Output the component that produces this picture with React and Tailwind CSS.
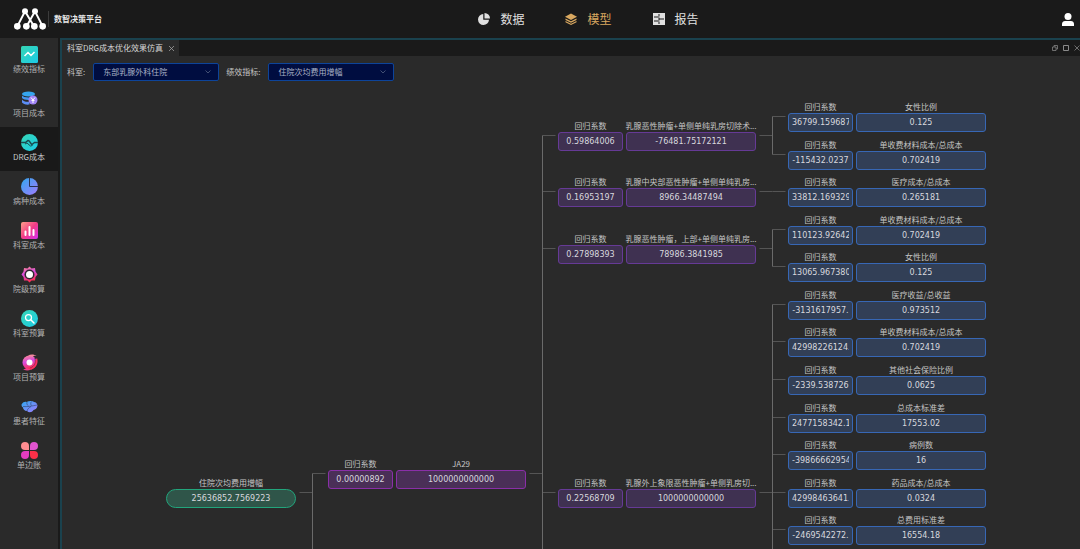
import React from "react";

const SERIES = [
  { label: "绩效指标", icon: "trend" },
  { label: "项目成本", icon: "coins" },
  { label: "DRG成本", icon: "pulse", active: true },
  { label: "病种成本", icon: "pie" },
  { label: "科室成本", icon: "bars" },
  { label: "院级预算", icon: "gear" },
  { label: "科室预算", icon: "search" },
  { label: "项目预算", icon: "swirl" },
  { label: "患者特征", icon: "shell" },
  { label: "单边账", icon: "clover" },
];

const TONES = {
  green: "bg-[#2f5549] border-[#22a57c] rounded-full",
  magenta: "bg-[#4a2f57] border-[#8a2fa8] rounded-[3px]",
  purple: "bg-[#3f3151] border-[#663a96] rounded-[3px]",
  blue: "bg-[#323f56] border-[#3767b5] rounded-[3px]",
};

// y is the top of the value box, inside the canvas
const NODES = [
  { id: "root", x: 104, y: 401, tone: "green", name: "住院次均费用增幅", value: "25636852.7569223" },
  { id: "ja29", x: 266, y: 382, tone: "magenta", name: "JA29", coef: "0.00000892", value: "1000000000000" },
  { id: "m1", x: 496, y: 44, tone: "purple", name: "乳腺恶性肿瘤+单侧单纯乳房切除术...", coef: "0.59864006", value: "-76481.75172121" },
  { id: "m2", x: 496, y: 100, tone: "purple", name: "乳腺中央部恶性肿瘤+单侧单纯乳房...", coef: "0.16953197", value: "8966.34487494" },
  { id: "m3", x: 496, y: 157, tone: "purple", name: "乳腺恶性肿瘤，上部+单侧单纯乳房...", coef: "0.27898393", value: "78986.3841985" },
  { id: "m4", x: 496, y: 401, tone: "purple", name: "乳腺外上象限恶性肿瘤+单侧乳房切...", coef: "0.22568709", value: "1000000000000" },
  { id: "l1", x: 726, y: 25, tone: "blue", name: "女性比例", coef: "36799.159687", value: "0.125" },
  { id: "l2", x: 726, y: 63, tone: "blue", name: "单收费材料成本/总成本", coef: "-115432.0237", value: "0.702419" },
  { id: "l3", x: 726, y: 100, tone: "blue", name: "医疗成本/总成本", coef: "33812.169329", value: "0.265181" },
  { id: "l4", x: 726, y: 138, tone: "blue", name: "单收费材料成本/总成本", coef: "110123.92642", value: "0.702419" },
  { id: "l5", x: 726, y: 175, tone: "blue", name: "女性比例", coef: "13065.967380", value: "0.125" },
  { id: "l6", x: 726, y: 213, tone: "blue", name: "医疗收益/总收益", coef: "-3131617957.", value: "0.973512" },
  { id: "l7", x: 726, y: 250, tone: "blue", name: "单收费材料成本/总成本", coef: "42998226124.", value: "0.702419" },
  { id: "l8", x: 726, y: 288, tone: "blue", name: "其他社会保险比例", coef: "-2339.538726", value: "0.0625" },
  { id: "l9", x: 726, y: 326, tone: "blue", name: "总成本标准差", coef: "2477158342.1", value: "17553.02" },
  { id: "l10", x: 726, y: 363, tone: "blue", name: "病例数", coef: "-39866662954", value: "16" },
  { id: "l11", x: 726, y: 401, tone: "blue", name: "药品成本/总成本", coef: "42998463641.", value: "0.0324" },
  { id: "l12", x: 726, y: 438, tone: "blue", name: "总费用标准差", coef: "-2469542272.", value: "16554.18" },
];

// x of the trunk, parent line, child lines; open trunks run on below the view
const BRANCHES = [
  { x: 250, parent: 401, children: [382], open: true },
  { x: 480, parent: 382, children: [44, 100, 157, 401], open: true },
  { x: 710, parent: 44, children: [25, 63] },
  { x: 710, parent: 100, children: [100] },
  { x: 710, parent: 157, children: [138, 175] },
  { x: 710, parent: 401, children: [213, 250, 288, 326, 363, 401, 438], open: true },
];

const Gradients = () => (
  <svg className="absolute h-0 w-0" aria-hidden="true">
    <defs>
      <linearGradient id="teal" x1="0" y1="0" x2="1" y2="1">
        <stop offset="0" stopColor="#36d6b4" />
        <stop offset="1" stopColor="#1ccbe8" />
      </linearGradient>
      <linearGradient id="violet" x1="0" y1="0" x2="1" y2="1">
        <stop offset="0" stopColor="#2fa8ee" />
        <stop offset="1" stopColor="#a17bff" />
      </linearGradient>
      <linearGradient id="pink" x1="0" y1="0" x2="1" y2="1">
        <stop offset="0" stopColor="#ffa08a" />
        <stop offset="0.5" stopColor="#f13c86" />
        <stop offset="1" stopColor="#d52ff0" />
      </linearGradient>
      <linearGradient id="rose" x1="0" y1="0" x2="0.3" y2="1">
        <stop offset="0" stopColor="#ff8f8a" />
        <stop offset="0.5" stopColor="#d94be0" />
        <stop offset="1" stopColor="#fb2f52" />
      </linearGradient>
    </defs>
  </svg>
);

const SideIcon = ({ name }) => {
  const shapes = {
    trend: (
      <>
        <rect width="34" height="34" rx="3" fill="url(#teal)" />
        <path d="M7 20l7-7 6 6 7-7" fill="none" stroke="#fff" strokeWidth="3" />
      </>
    ),
    coins: (
      <>
        <ellipse cx="15" cy="8" rx="13" ry="5" fill="#35a5ee" />
        <path d="M2 11c3 5 23 5 26 0v5c-3 5-23 5-26 0z" fill="#4596f0" />
        <path d="M2 19c3 5 12 5 15 4v6c-7 1-13-1-15-4z" fill="#5b8df5" />
        <circle cx="24" cy="20" r="9" fill="#a184f5" />
        <path d="M20 15l4 5 4-5M24 20v6M21 21h6" fill="none" stroke="#fff" strokeWidth="2" />
      </>
    ),
    pulse: (
      <>
        <circle cx="17" cy="17" r="17" fill="url(#teal)" />
        <path d="M0 17h9l5-4c3-1 5 7 8 8l5-4h7" fill="none" stroke="#1a4a50" strokeWidth="3" />
        <path d="M8 20l4-2 7 6 4-1" fill="none" stroke="#1a4a50" strokeWidth="2" />
      </>
    ),
    pie: (
      <>
        <circle cx="17" cy="17" r="17" fill="url(#violet)" />
        <path d="M17 0v17h17" fill="none" stroke="#29334f" strokeWidth="2" />
      </>
    ),
    bars: (
      <>
        <rect width="34" height="34" rx="4" fill="url(#pink)" />
        <path d="M9 19v7M17 10v16M25 16v10" stroke="#fff" strokeWidth="4" strokeLinecap="round" />
      </>
    ),
    gear: (
      <>
        <path
          d="M17 1l4 4 7-1 1 7 4 6-4 5-1 7-7 0-4 4-4-4-7 0-1-7-4-5 4-6 1-7 7 1z"
          fill="url(#rose)"
        />
        <circle cx="17" cy="17" r="10" fill="#302631" />
        <circle cx="17" cy="17" r="7" fill="#fff" />
      </>
    ),
    search: (
      <>
        <circle cx="17" cy="17" r="17" fill="url(#teal)" />
        <circle cx="15" cy="15" r="6" fill="none" stroke="#fff" strokeWidth="2.5" />
        <path d="M20 20l6 6" stroke="#fff" strokeWidth="3" strokeLinecap="round" />
      </>
    ),
    swirl: (
      <>
        <circle cx="17" cy="17" r="14" fill="url(#rose)" />
        <path d="M14 3C20 0 27 1 31 4c-4-1-6 0-7 2z" fill="#f58aa0" />
        <path d="M20 31c-6 3-13 2-17-1 4 1 6 0 7-2z" fill="#f0408c" />
        <path d="M32 8c4 11-3 22-15 24 8-4 12-10 11-19z" fill="#fb2f62" />
        <path d="M27 8c4 9 0 17-9 20" fill="none" stroke="#5a2040" strokeWidth="1" />
        <circle cx="17" cy="17" r="6" fill="#fff" />
      </>
    ),
    shell: (
      <>
        <path
          d="M1 13c3-5 7-6 10-5 6-3 12-2 15 0 4 0 6 3 7 7-1 6-4 8-8 9-3 5-9 6-13 2-5 0-8-4-8-7-2-1-3-3-3-6z"
          fill="url(#violet)"
        />
        <path
          d="M4 17c8 1 18-1 28-3M12 8c-1 3 0 6 3 8M21 7c-2 3-2 6 0 8M12 26c1-4 4-7 8-9"
          fill="none"
          stroke="#29334f"
          strokeWidth="1"
        />
      </>
    ),
    clover: (
      <>
        <path d="M16 16H8a8 8 0 1 1 8-8z" fill="#ff8d91" />
        <path d="M18 16V8a8 8 0 1 1 8 8z" fill="#e254cf" />
        <path d="M16 18v8a8 8 0 1 1-8-8z" fill="#e43cc0" />
        <path d="M18 18h8a8 8 0 1 1-8 8z" fill="#fb3048" />
      </>
    ),
  };
  return (
    <svg className="h-[17px] w-[17px]" viewBox="0 0 34 34" aria-hidden="true">
      {shapes[name]}
    </svg>
  );
};

const NavLink = ({ label, active, children }) => (
  <a
    href="#"
    className={
      active
        ? "flex items-center gap-[10px] text-[#d9a860]"
        : "flex items-center gap-[10px] text-[#e0e0e0]"
    }
  >
    <svg className="h-3 w-3" viewBox="0 0 24 24" fill="currentColor" aria-hidden="true">
      {children}
    </svg>
    {label}
  </a>
);

const Header = () => (
  <header className="flex h-[38px] shrink-0 items-center bg-[#1a1a1a]">
    <div className="flex w-[115px] shrink-0 items-center pl-[14px]">
      <svg className="h-[22px] w-[32px]" viewBox="0 0 96 66" aria-hidden="true">
        <path
          d="M10 55L33 10L60 55M38 55L63 10L86 55"
          fill="none"
          stroke="#fff"
          strokeWidth="6"
        />
        <g fill="#fff">
          <circle cx="33" cy="10" r="9" />
          <circle cx="63" cy="10" r="9" />
          <circle cx="10" cy="55" r="10" />
          <circle cx="37" cy="55" r="10" />
          <circle cx="61" cy="55" r="10" />
          <circle cx="86" cy="55" r="10" />
        </g>
      </svg>
      <span className="ml-[2px] h-4 w-px bg-[#3c3c3c]" />
      <h1 className="ml-[5px] whitespace-nowrap text-[8px] font-bold text-[#e8e8e8]">数智决策平台</h1>
    </div>
    <nav className="flex flex-1 items-center justify-center gap-[41px] text-[12px] leading-4">
      <NavLink label="数据">
        <path d="M10.500 2A11 11 0 1 0 22 13.500H10.500z" />
        <path d="M13 0a11 11 0 0 1 11 11H13z" />
      </NavLink>
      <NavLink label="模型" active>
        <path d="M12 1L24 7.500 12 14 0 7.500z" />
        <path d="M1 11l11 5.500L23 11v3L12 19.500 1 14z" />
        <path d="M1 16l11 5.500L23 16v2.500L12 24 1 18.500z" />
      </NavLink>
      <NavLink label="报告">
        <path
          fillRule="evenodd"
          d="M0 0h24v24H0zM2 7v2h9V7zM2 15v2h9v-2zM11 2v5h2V2zM11 9v6h2V9zM11 17v5h2v-5zM13 11v2h9v-2z"
        />
      </NavLink>
    </nav>
    <button type="button" aria-label="用户" className="mr-[6px] shrink-0">
      <svg className="h-[13px] w-3" viewBox="0 0 24 26" fill="#fff">
        <circle cx="12" cy="7" r="7" />
        <path d="M0 26v-4c0-4 3-6 6-6h12c3 0 6 2 6 6v4z" />
      </svg>
    </button>
  </header>
);

const Sidebar = () => (
  <aside className="w-[58px] shrink-0 bg-[#2a2a2a] pt-px">
    {SERIES.map((item) => (
      <a
        key={item.label}
        href="#"
        className={
          item.active
            ? "flex h-11 flex-col items-center bg-[#191919] pt-[7px] text-[8px] text-[#c8c8c8]"
            : "flex h-11 flex-col items-center pt-[7px] text-[8px] text-[#b0b0b0]"
        }
      >
        <SideIcon name={item.icon} />
        <span className="leading-3">{item.label}</span>
      </a>
    ))}
  </aside>
);

const TabBar = () => (
  <div className="flex h-4 items-center justify-between bg-[#1a1a1a]">
    <div className="flex h-4 items-center gap-[6px] bg-[#2a2a2a] pl-[5px] pr-[5px] text-[8px] text-[#d6d6d6]">
      科室DRG成本优化效果仿真
      <button type="button" aria-label="关闭标签">
        <svg className="h-[5px] w-[5px]" viewBox="0 0 10 10" stroke="#a0a0a0" strokeWidth="1.600">
          <path d="M0 0l10 10M10 0L0 10" />
        </svg>
      </button>
    </div>
    <div className="flex shrink-0 gap-[5px]">
      <button type="button" aria-label="还原">
        <svg className="h-[6px] w-[6px]" viewBox="0 0 12 12" fill="none" stroke="#8a8a8a" strokeWidth="1.500">
          <path d="M1 4h7v7H1zM4 4V1h7v7H8" />
        </svg>
      </button>
      <button type="button" aria-label="最大化">
        <svg className="h-[6px] w-[6px]" viewBox="0 0 12 12" fill="none" stroke="#8a8a8a" strokeWidth="2">
          <path d="M1 1h10v10H1z" />
        </svg>
      </button>
      <button type="button" aria-label="关闭">
        <svg className="h-[6px] w-[6px]" viewBox="0 0 12 12" stroke="#8a8a8a" strokeWidth="1.500">
          <path d="M1 1l10 10M11 1L1 11" />
        </svg>
      </button>
    </div>
  </div>
);

const Filter = ({ id, label, value }) => (
  <div className="flex items-center gap-2">
    <label htmlFor={id} className="text-[#c4c4c4]">
      {label}:
    </label>
    <div className="grid items-center">
      <select
        id={id}
        className="col-start-1 row-start-1 h-[18px] w-[126px] appearance-none rounded-[2px] border border-[#0d449a] bg-[#000d40] pl-[9px] text-[#a9b1c6]"
      >
        <option>{value}</option>
      </select>
      <svg
        className="pointer-events-none col-start-1 row-start-1 mr-2 h-1 w-[6px] justify-self-end"
        viewBox="0 0 12 8"
        fill="none"
        stroke="#5a6785"
        strokeWidth="1.500"
      >
        <path d="M1 1l5 5 5-5" />
      </svg>
    </div>
  </div>
);

const Field = ({ id, label, value, tone, wide }) => (
  <div className={wide ? "flex w-[130px] flex-col items-center" : "flex w-[65px] flex-col items-center"}>
    <label htmlFor={id} className="h-3 whitespace-nowrap leading-3">
      {label}
    </label>
    <input
      id={id}
      readOnly
      value={value}
      className={`h-[19px] w-full border px-[3px] text-center font-['DejaVu_Sans',sans-serif] text-[#d8d8de] ${TONES[tone]}`}
    />
  </div>
);

const Tree = () => (
  <main className="relative min-h-0 flex-1 overflow-hidden text-[8px] text-[#c4c4c4]">
    <svg className="absolute left-0 top-0 h-full w-full" fill="none" aria-hidden="true">
      {BRANCHES.map((b) => {
        const top = Math.min(b.parent, ...b.children) + 3;
        const bottom = b.open ? 2000 : Math.max(...b.children) + 3;
        return (
          <g key={`${b.x}-${b.parent}`} transform="translate(0.5 0.5)">
            <path
              d={`M${b.x - 13} ${b.parent + 3}H${b.x}${b.children
                .map((y) => `M${b.x} ${y + 3}h13`)
                .join("")}`}
              stroke="#555"
            />
            <path d={`M${b.x} ${top}V${bottom}`} stroke="#6a6a6a" />
          </g>
        );
      })}
    </svg>
    {NODES.map((n) => (
      <div key={n.id} className="absolute flex gap-[3px]" style={{ left: n.x, top: n.y - 12 }}>
        {n.coef && <Field id={`${n.id}-coef`} label="回归系数" value={n.coef} tone={n.tone} />}
        <Field id={`${n.id}-value`} label={n.name} value={n.value} tone={n.tone} wide />
      </div>
    ))}
  </main>
);

const App = () => {
  return (
    <div className="flex h-screen flex-col overflow-hidden bg-[#1a1a1a] font-['Noto_Sans_CJK_SC',sans-serif]">
      <Gradients />
      <Header />
      <div className="flex min-h-0 flex-1 gap-[2px]">
        <Sidebar />
        <section className="flex min-w-0 flex-1 flex-col border-l-2 border-t-2 border-[#1a424e] bg-[#2a2a2a]">
          <TabBar />
          <div className="flex h-8 shrink-0 items-center gap-[7px] pl-[5px] text-[8px]">
            <Filter id="dept" label="科室" value="东部乳腺外科住院" />
            <Filter id="metric" label="绩效指标" value="住院次均费用增幅" />
          </div>
          <Tree />
        </section>
      </div>
    </div>
  );
};

export default App;
